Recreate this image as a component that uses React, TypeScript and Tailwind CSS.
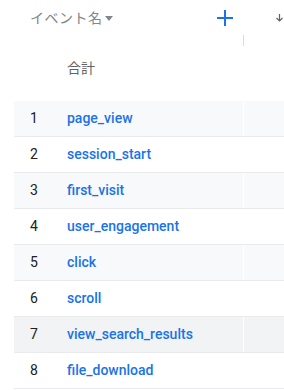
import React from 'react';

const events = [
  'page_view',
  'session_start',
  'first_visit',
  'user_engagement',
  'click',
  'scroll',
  'view_search_results',
  'file_download',
];

const rowBg = (i: number) => {
  if (i === 6) return 'bg-[#f1f3f4]';
  return i % 2 === 0 ? 'bg-[#f8f9fa]' : 'bg-white';
};

const App = () => {
  return (
    <div className="w-[284px] h-[390px] overflow-hidden bg-white font-['Roboto','Noto_Sans_CJK_JP',sans-serif]">
      {/* header */}
      <div className="flex h-[35px] items-center">
        <div className="flex w-[243px] items-center justify-between pl-[30px] pr-[10px]">
          <div className="flex items-center gap-[2px] text-[14px] tracking-[0.5px] text-[#80868b] font-['Noto_Sans_CJK_JP',sans-serif]">
            <span>イベント名</span>
            <svg width="8" height="5" viewBox="0 0 8 5" className="mt-[1px]">
              <path d="M0 0 L8 0 L4 5 Z" fill="#80868b" />
            </svg>
          </div>
          <svg width="16" height="16" viewBox="0 0 16 16">
            <path d="M8 0 V16 M0 8 H16" stroke="#1a73e8" strokeWidth="2" />
          </svg>
        </div>
        <div className="flex flex-1 pl-[33px]">
          <svg width="7" height="8" viewBox="0 0 7 8">
            <path d="M3.5 0 V7 M0.5 4 L3.5 7 L6.5 4" stroke="#5f6368" strokeWidth="1.2" fill="none" />
          </svg>
        </div>
      </div>
      <div className="ml-[243px] h-[11px] w-px bg-[#dadce0]" />
      <div className="flex h-[42px] items-center pl-[67px] text-[14px] text-[#5f6368] font-['Noto_Sans_CJK_JP',sans-serif]">
        合計
      </div>
      <div className="h-[13px]" />

      {/* rows */}
      <div className="ml-[14px]">
        {events.map((name, i) => (
          <div key={name} className={`flex h-[36px] border-b border-[#e8eaed] ${rowBg(i)}`}>
            <div className="flex w-[53px] items-center pl-[16px] text-[14px] text-[#202124]">{i + 1}</div>
            <div className="flex w-[176px] items-center text-[14px] font-medium text-[#1a73e8]">{name}</div>
            <div className="w-px bg-white" />
            <div className="flex-1" />
          </div>
        ))}
      </div>
    </div>
  );
};

export default App;
